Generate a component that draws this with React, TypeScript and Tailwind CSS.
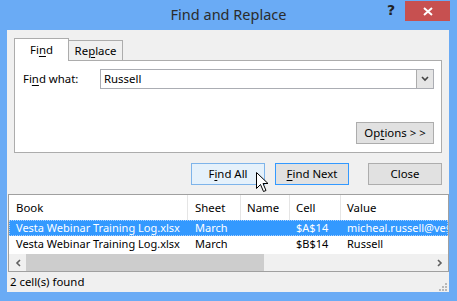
import React from 'react'

const font = "font-['Segoe_UI','Noto_Sans',sans-serif]"

function Btn({ children, className = '' }: { children: React.ReactNode; className?: string }) {
  return (
    <div className={`w-[74px] h-[22px] flex items-center justify-center border ${className}`}>
      {children}
    </div>
  )
}

function Cursor() {
  return (
    <svg className="absolute left-[256px] top-[172px] pointer-events-none" width="13" height="21" viewBox="0 0 13 21">
      <path d="M0.5 0.5 L0.5 16.5 L4.5 12.5 L7.5 19.5 L10 18.5 L7 11.5 L12 11.5 Z" fill="#fff" stroke="#000" strokeWidth="1" strokeLinejoin="miter" />
    </svg>
  )
}

const cols = [
  { label: 'Book', w: 'w-[179px]', pl: 'pl-[7px]' },
  { label: 'Sheet', w: 'w-[53px]', pl: 'pl-[7px]' },
  { label: 'Name', w: 'w-[49px]', pl: 'pl-[6px]' },
  { label: 'Cell', w: 'w-[51px]', pl: 'pl-[6px]' },
  { label: 'Value', w: 'flex-1', pl: 'pl-[6px]' },
]

const rows = [
  ['Vesta Webinar Training Log.xlsx', 'March', '', '$A$14', 'micheal.russell@ves'],
  ['Vesta Webinar Training Log.xlsx', 'March', '', '$B$14', 'Russell'],
]

export default function App() {
  return (
    <div className={`relative w-[457px] h-[301px] bg-[#6aabf5] flex flex-col text-[11.4px] text-black ${font}`}>
      {/* title bar */}
      <div className="relative h-[30px] flex items-center justify-center">
        <span className="text-[14.5px] text-[#2b2b2b] -mt-[1px]">Find and Replace</span>
        <div className="absolute right-[7px] top-[1px] flex items-start">
          <span className="text-[14px] font-bold text-[#222] mr-[10px] mt-[2px] leading-none font-['DejaVu_Sans',sans-serif]">?</span>
          <div className="w-[45px] h-[20px] bg-[#c75050] flex items-center justify-center">
            <svg width="10" height="9" viewBox="0 0 10 9">
              <path d="M1 1 L9 8 M9 1 L1 8" stroke="#fff" strokeWidth="2" />
            </svg>
          </div>
        </div>
      </div>

      {/* body */}
      <div className="ml-[7px] mr-[8px] flex-1 bg-[#f0f0f0] flex flex-col">
        {/* tabs */}
        <div className="pt-[8px] px-[7px]">
          <div className="flex items-end h-[23px] relative z-10">
            <div className="w-[55px] h-[23px] bg-white border border-b-0 border-[#acacac] flex items-center justify-center pb-[1px]">
              Fi<u className="underline-offset-2">n</u>d
            </div>
            <div className="w-[54px] h-[20px] bg-[#f0f0f0] border border-l-0 border-b-0 border-[#acacac] flex items-center justify-center mb-[1px]">
              Re<u className="underline-offset-2">p</u>lace
            </div>
          </div>
          <div className="-mt-[1px] h-[93px] bg-white border border-[#acacac] flex flex-col pt-[8px] pl-[8px] pr-[7px]">
            <div className="flex items-center h-[20px]">
              <span className="w-[77px]">
                Fi<u className="underline-offset-2">n</u>d what:
              </span>
              <div className="flex-1 h-[20px] border border-[#abadb3] flex">
                <span className="flex-1 pl-[3px] flex items-center">Russell</span>
                <div className="w-[17px] h-full bg-[#e5e5e5] border-l border-[#acacac] flex items-center justify-center">
                  <svg width="8" height="6" viewBox="0 0 8 6">
                    <path d="M1 1 L4 4 L7 1" stroke="#444" strokeWidth="1.6" fill="none" />
                  </svg>
                </div>
              </div>
            </div>
            <div className="flex justify-end mt-[33px]">
              <div className="w-[78px] h-[22px] border border-[#adadad] bg-[#e1e1e1] flex items-center justify-center">
                Op<u className="underline-offset-2">t</u>ions &gt; &gt;
              </div>
            </div>
          </div>
        </div>

        {/* buttons */}
        <div className="flex justify-end pr-[7px] mt-[10px]">
          <Btn className="border-[#7eb4ea] bg-[#e5f1fb]">
            F<u className="underline-offset-2">i</u>nd All
          </Btn>
          <Btn className="ml-[10px] border-[#3399ff] bg-[#e1e1e1]">
            <u className="underline-offset-2">F</u>ind Next
          </Btn>
          <Btn className="ml-[19px] border-[#adadad] bg-[#e1e1e1]">Close</Btn>
        </div>

        {/* results list */}
        <div className="ml-[1px] mt-[9px] h-[78px] border border-[#a0a0a0] bg-white flex flex-col overflow-hidden text-[11px]">
          <div className="h-[25px] flex shrink-0 text-[11.4px]">
            {cols.map((c, i) => (
              <div key={c.label} className={`${c.w} ${c.pl} flex items-center ${i < cols.length - 1 ? 'border-r border-[#e5e5e5]' : ''}`}>
                {c.label}
              </div>
            ))}
          </div>
          {rows.map((r, ri) => (
            <div
              key={ri}
              className={`h-[16px] flex shrink-0 whitespace-nowrap ${ri === 0 ? 'bg-[#3399ff] text-white outline outline-1 outline-dotted outline-[#a8d0ff] -outline-offset-1' : ''}`}
            >
              {r.map((cell, ci) => (
                <div key={ci} className={`${cols[ci].w} ${cols[ci].pl} flex items-center overflow-hidden ${ci < 4 ? 'border-r border-transparent' : ''}`}>
                  {cell}
                </div>
              ))}
            </div>
          ))}
          <div className="mt-[2px] h-[17px] bg-[#f0f0f0] flex items-center shrink-0">
            <div className="w-[17px] h-full flex items-center justify-center">
              <svg width="6" height="8" viewBox="0 0 6 8">
                <path d="M5 1 L2 4 L5 7" stroke="#606060" strokeWidth="1.6" fill="none" />
              </svg>
            </div>
            <div className="w-[238px] h-full bg-[#cdcdcd]" />
            <div className="flex-1" />
            <div className="w-[17px] h-full flex items-center justify-center">
              <svg width="6" height="8" viewBox="0 0 6 8">
                <path d="M1 1 L4 4 L1 7" stroke="#606060" strokeWidth="1.6" fill="none" />
              </svg>
            </div>
          </div>
        </div>

        {/* status */}
        <div className="flex-1 flex items-center justify-between pl-[3px] pr-[2px]">
          <span>2 cell(s) found</span>
          <svg className="self-end mb-[1px]" width="8" height="8" viewBox="0 0 8 8">
            <g fill="#b8b8b8">
              <rect x="6" y="0" width="2" height="2" />
              <rect x="3" y="3" width="2" height="2" />
              <rect x="6" y="3" width="2" height="2" />
              <rect x="0" y="6" width="2" height="2" />
              <rect x="3" y="6" width="2" height="2" />
              <rect x="6" y="6" width="2" height="2" />
            </g>
          </svg>
        </div>
      </div>
      <div className="h-[9px]" />

      <Cursor />
    </div>
  )
}
